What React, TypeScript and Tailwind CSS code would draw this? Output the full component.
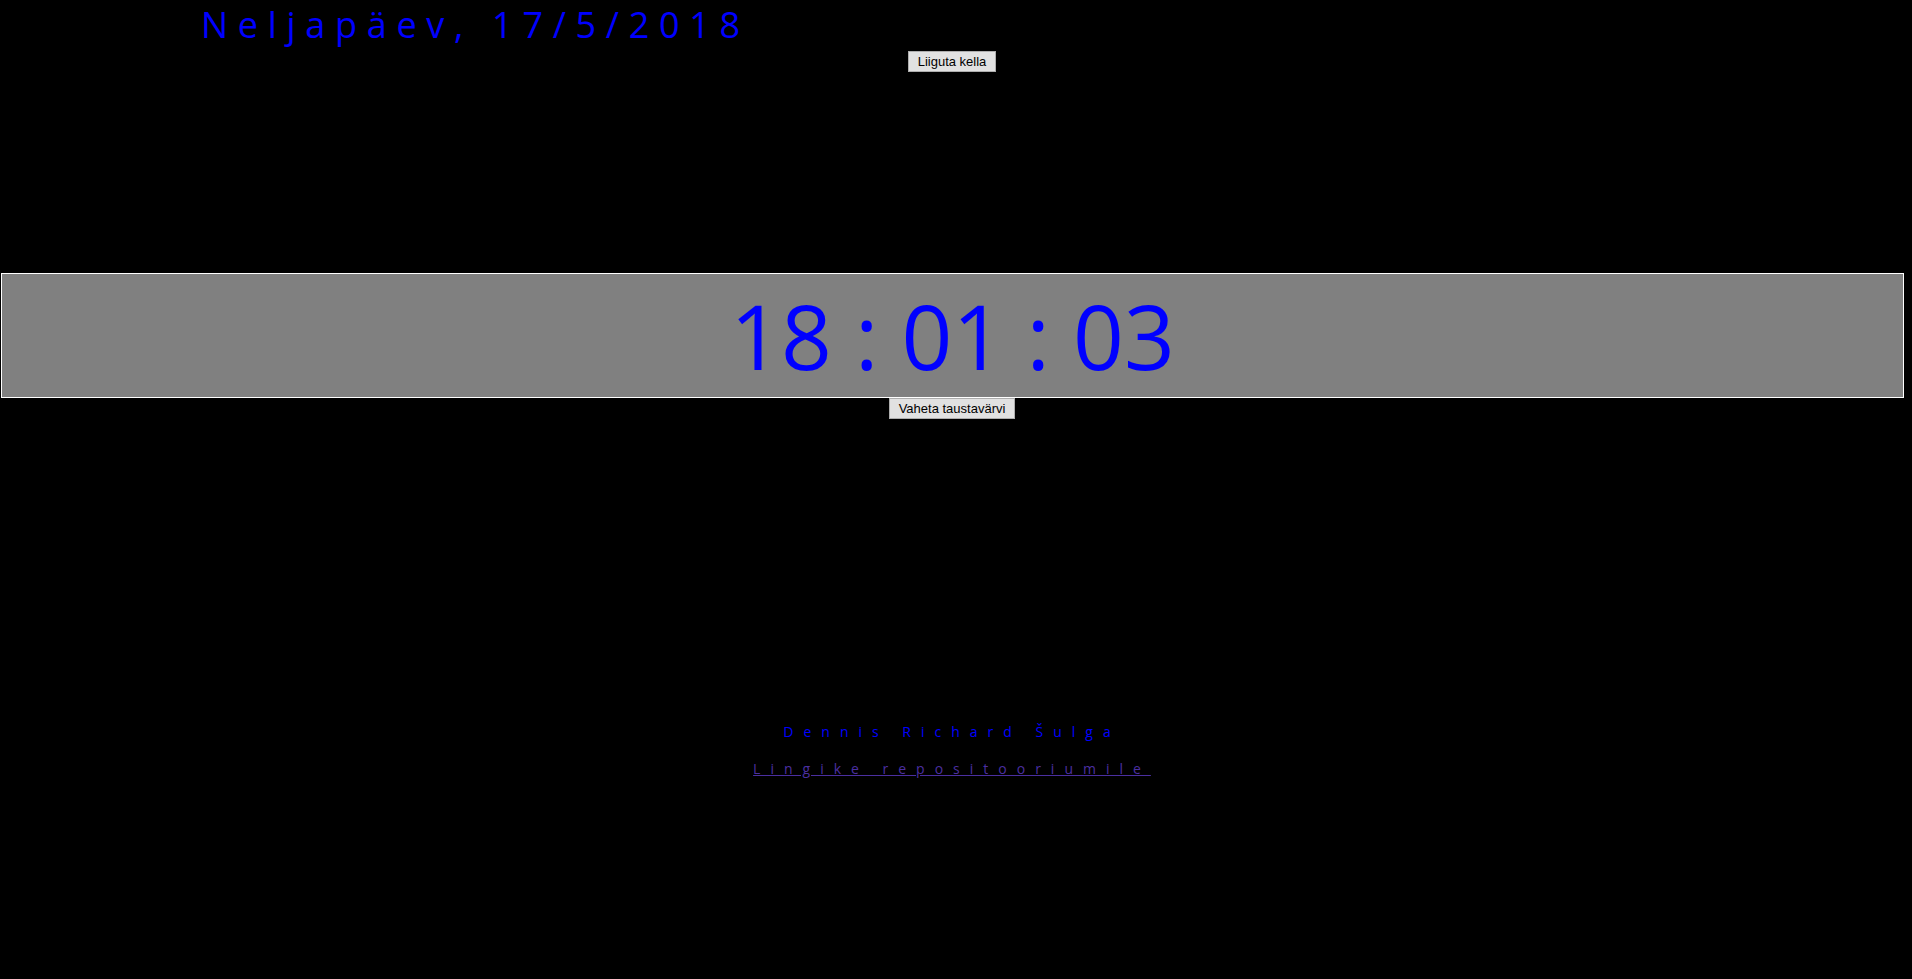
export default function App() {
  return (
    <div className="min-h-[979px] w-full bg-black" style={{ fontFamily: "'Open Sans', 'Noto Sans', sans-serif" }}>
      <div className="w-[1904px]">
        <div className="pl-[201px] pt-[2px]">
          <h1 className="text-[36px] leading-[46px] tracking-[9.7px] text-[#0000ff]">Neljapäev, 17/5/2018</h1>
        </div>
        <div className="flex justify-center pt-[3px]">
          <button
            type="button"
            className="h-[21px] border border-[#adadad] bg-[#e1e1e1] px-[9px] text-[13px] leading-none text-black"
            style={{ fontFamily: "'Liberation Sans', Arial, sans-serif" }}
          >
            Liiguta kella
          </button>
        </div>
        <div className="mt-[201px] ml-[1px] flex h-[125px] items-center justify-center border border-white bg-[#808080]">
          <span className="text-[89px] leading-none text-[#0000ff]">18 : 01 : 03</span>
        </div>
        <div className="flex justify-center">
          <button
            type="button"
            className="h-[21px] border border-[#adadad] bg-[#e1e1e1] px-[9px] text-[13px] leading-none text-black"
            style={{ fontFamily: "'Liberation Sans', Arial, sans-serif" }}
          >
            Vaheta taustavärvi
          </button>
        </div>
        <div className="mt-[304px] flex flex-col items-center gap-[19px]">
          <p className="text-[14px] font-medium leading-[18px] tracking-[10px] text-[#0000ff]">Dennis Richard Šulga</p>
          <a href="#" className="text-[14px] leading-[18px] tracking-[10px] text-[#4b2fa0] underline">
            Lingike repositooriumile
          </a>
        </div>
      </div>
    </div>
  );
}
